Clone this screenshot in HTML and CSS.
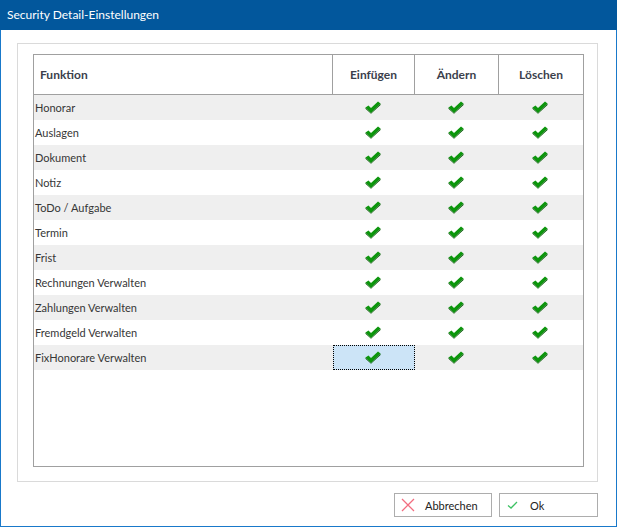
FILE: index.html
```html
<!DOCTYPE html>
<html lang="de">

<head>
    <meta charset="UTF-8" />
    <title>Security Detail-Einstellungen</title>
    <link rel="stylesheet" href="styles.css">
</head>

<body>
    <div class="window">
        <div class="titlebar">Security Detail-Einstellungen</div>

        <div class="content">
            <div class="panel">
                <div class="grid">
                    <div class="grid-head">
                        <div class="hcell hcell-left">Funktion</div>
                        <div class="hcell">Einfügen</div>
                        <div class="hcell">Ändern</div>
                        <div class="hcell hcell-last">Löschen</div>
                    </div>
                    <div class="grid-body" id="gridBody"></div>
                </div>
            </div>

            <div class="buttons">
                <button class="btn btn-cancel">
                    <svg class="btn-icon" width="14" height="14" viewBox="0 0 14 14">
                        <path d="M1 1 L13 13 M13 1 L1 13" stroke="#f26d80" stroke-width="1.3" fill="none" />
                    </svg>
                    <span>Abbrechen</span>
                </button>
                <button class="btn btn-ok">
                    <svg class="btn-icon" width="14" height="14" viewBox="0 0 14 14">
                        <path d="M2 7.5 L5 10 L11 4" stroke="#3cc163" stroke-width="1.3" fill="none" />
                    </svg>
                    <span>Ok</span>
                </button>
            </div>
        </div>
    </div>

    <script>
        const rows = [
            'Honorar', 'Auslagen', 'Dokument', 'Notiz', 'ToDo / Aufgabe', 'Termin',
            'Frist', 'Rechnungen Verwalten', 'Zahlungen Verwalten', 'Fremdgeld Verwalten',
            'FixHonorare Verwalten'
        ];

        const check = '<svg width="16" height="13" viewBox="0 0 16 13">' +
            '<path d="M0.5 6.5 L3.5 4.5 L6 7 L13 0.5 L15.5 2.5 L6 12 Z" fill="#0c960c" />' +
            '<path d="M0.5 6.5 L6 12 L15.5 2.5 L15.5 4 L6 12.8 L0.5 7.8 Z" fill="#055a05" />' +
            '</svg>';

        const body = document.getElementById('gridBody');
        rows.forEach(function (name, i) {
            const row = document.createElement('div');
            row.className = 'grid-row' + (i % 2 === 0 ? ' row-alt' : '');
            let html = '<div class="cell cell-left">' + name + '</div>';
            for (let c = 0; c < 3; c++) {
                const selected = (i === rows.length - 1 && c === 0) ? ' cell-selected' : '';
                html += '<div class="cell cell-check' + selected + '">' + check + '</div>';
            }
            row.innerHTML = html;
            body.appendChild(row);
        });
    </script>
</body>

</html>
```

FILE: styles.css
```css
body {
    margin: 0;
    font-family: Lato, 'Noto Sans', sans-serif;
    font-size: 11px;
    color: #333;
    background: #fff;
}

.window {
    width: 617px;
    height: 527px;
    box-sizing: border-box;
    border: 1px solid #1979ca;
    border-top: none;
    display: flex;
    flex-direction: column;
}

.titlebar {
    height: 30px;
    line-height: 29px;
    padding-left: 7px;
    background: #02579c;
    color: #fff;
    font-size: 12px;
    margin: 0 -1px;
}

.content {
    flex: 1;
    padding: 13px 18px 0 16px;
    display: flex;
    flex-direction: column;
}

.panel {
    height: 439px;
    box-sizing: border-box;
    border: 1px solid #dadada;
    padding: 10px 13px 14px 15px;
    display: flex;
}

.grid {
    flex: 1;
    border: 1px solid #a0a0a0;
    display: flex;
    flex-direction: column;
}

.grid-head,
.grid-row {
    display: grid;
    grid-template-columns: 299px 82px 84px 1fr;
}

.grid-head {
    height: 39px;
    border-bottom: 1px solid #a0a0a0;
}

.hcell {
    display: flex;
    align-items: center;
    justify-content: center;
    font-weight: 700;
    font-size: 12px;
    color: #3b3f4c;
    border-right: 1px solid #a0a0a0;
}

.hcell-left {
    justify-content: flex-start;
    padding-left: 6px;
}

.hcell-last {
    border-right: none;
}

.grid-row {
    height: 25px;
}

.row-alt {
    background: #efefef;
}

.cell {
    display: flex;
    align-items: center;
}

.cell-left {
    padding-left: 1px;
    color: #363636;
}

.cell-check {
    justify-content: center;
    padding-right: 3px;
}

.cell-selected {
    background: #cce4f7;
    outline: 1px dotted #000;
    outline-offset: -1px;
}

.buttons {
    display: flex;
    justify-content: flex-end;
    gap: 7px;
    margin-top: 11px;
}

.btn {
    height: 24px;
    display: flex;
    align-items: center;
    gap: 10px;
    background: #fff;
    border: 1px solid #adadad;
    font-family: inherit;
    font-size: 11px;
    color: #222;
    padding: 0 0 0 6px;
    cursor: pointer;
}

.btn-cancel {
    width: 98px;
}

.btn-ok {
    width: 99px;
}

.btn-icon {
    flex: none;
}
```
